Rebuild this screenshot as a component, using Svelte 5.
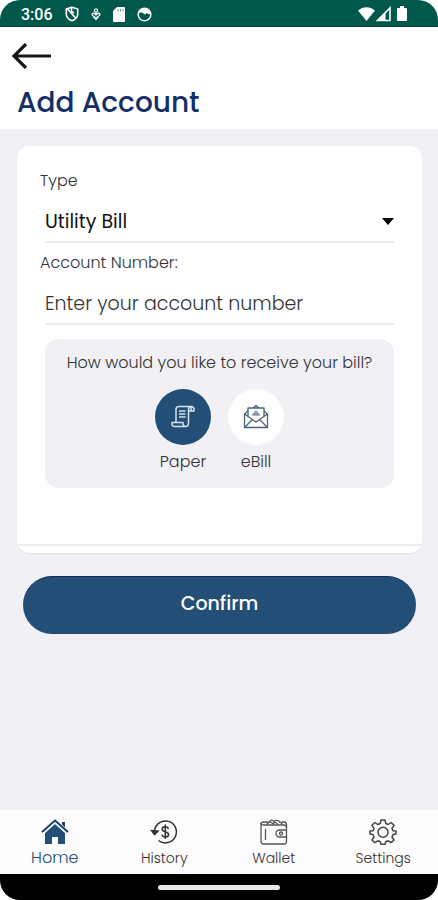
<script>
  let type = 'utility';
  let accountNumber = '';
  let delivery = 'paper';
</script>

<svelte:head>
  <title>Add Account</title>
</svelte:head>

<div class="app">
  <div class="status">
    <span class="time">3:06</span>
    <svg width="14" height="16" viewBox="0 0 14 16" fill="none" stroke="#fff" stroke-width="1.6">
      <path d="M7 1.2 12.7 3v5c0 3.4-2.8 5.7-5.7 6.8C4.1 13.7 1.3 11.4 1.3 8V3Z" />
      <path d="M2.5 3 11 12.500M6.500 2v3.500L9 7" />
    </svg>
    <svg width="10" height="14" viewBox="0 0 10 14" fill="none" stroke="#e4f1ed" stroke-width="1.3">
      <circle cx="5" cy="3.500" r="1.600" />
      <path d="M5 5v3M5 8C3 5.500 1 6 1 7.500S3 9 5 11C7 9 9 9 9 7.500S7 5.500 5 8M2.500 10 5 12.500 7.500 10" />
    </svg>
    <svg width="12" height="15" viewBox="0 0 12 15">
      <path d="M4 0h7a1 1 0 0 1 1 1v13a1 1 0 0 1-1 1H1a1 1 0 0 1-1-1V4Z" fill="#fff" />
      <path d="M5 2v2.500M7.500 2v2.500M10 2v2.500" stroke="#6b9c92" />
    </svg>
    <svg width="15" height="15" viewBox="0 0 15 15">
      <circle cx="7.500" cy="7.500" r="6.300" fill="none" stroke="#fff" stroke-width="1.500" />
      <path d="M1.500 5.500C3 2 5 1.500 7.500 1.500S12.500 3 13.500 6L12 7.500 10 6 8 7.500 5 5.500Z" fill="#fff" />
    </svg>
    <span class="spacer"></span>
    <svg width="50" height="16" viewBox="0 0 50 16">
      <path d="M0 4.500C5 0 12 0 17 4.500L8.500 15Z" fill="#fff" />
      <path d="M32 2v12.500H19.500Z" fill="none" stroke="#fff" stroke-width="1.600" />
      <path d="M27.500 7v8H20Z" fill="#fff" />
      <path d="M42 0h4v2h2a1 1 0 0 1 1 1v11a1 1 0 0 1-1 1h-8a1 1 0 0 1-1-1V3a1 1 0 0 1 1-1h2Z" fill="#fff" />
    </svg>
  </div>

  <header>
    <button class="back" type="button" aria-label="Back">
      <svg width="40" height="26" viewBox="0 0 40 26" fill="none" stroke="#171717" stroke-width="3.2">
        <path d="M14 1 2 13l12 12M2 13h37" />
      </svg>
    </button>
    <h1>Add Account</h1>
  </header>

  <main>
    <form on:submit|preventDefault>
      <div class="card">
        <div class="fields">
          <label class="caption" for="type">Type</label>
          <div class="control">
            <select id="type" bind:value={type}>
              <option value="utility">Utility Bill</option>
            </select>
            <svg width="12" height="7" viewBox="0 0 12 7"><path d="M0 0h12L6 7Z" /></svg>
          </div>
          <label class="caption" for="number">Account Number:</label>
          <div class="control">
            <input id="number" type="text" placeholder="Enter your account number" bind:value={accountNumber} />
          </div>

          <fieldset>
            <legend>How would you like to receive your bill?</legend>
            <div class="choices">
              <label class="choice">
                <input type="radio" name="delivery" value="paper" bind:group={delivery} />
                <span class="circle">
                  <svg width="26" height="24" viewBox="0 0 26 24" fill="none" stroke="currentColor" stroke-width="1.5" stroke-linejoin="round">
                    <path d="M6 17V4.500C6 2.500 7 1.500 9 1.500h12c-2 0-2.500 1-2.500 3V18c0 2-1 3.500-3 3.500S13 20 13 17.500H2C1.500 20 2.500 21.500 4.500 21.500h11" />
                    <path d="M21 1.500c2 0 3 1.200 3 3v1.500h-5.500M21 1.500V6" />
                    <path d="M9 6h6.500M9 9h6.500M9 12h6.500" />
                  </svg>
                </span>
                Paper
              </label>
              <label class="choice">
                <input type="radio" name="delivery" value="ebill" bind:group={delivery} />
                <span class="circle">
                  <svg width="26" height="24" viewBox="0 0 26 24" fill="none" stroke="currentColor" stroke-width="1.3" stroke-linejoin="round">
                    <path d="M5 6 1.500 9v13.500h23V9L21 6" />
                    <path d="M5 12V3h16v9M10 3l3-2.500L16 3" />
                    <path d="m1.500 9 11.500 8 11.500-8M1.500 22.500l8-8M24.500 22.500l-8-8" />
                    <path d="M9.500 10 13 6l3.500 4Z" fill="#8c9bab" stroke="#8c9bab" />
                  </svg>
                </span>
                eBill
              </label>
            </div>
          </fieldset>
        </div>
        <div class="foot"></div>
      </div>

      <button class="confirm" type="submit">Confirm</button>
    </form>
  </main>

  <nav>
    <a class="active" href="#home" aria-current="page">
      <svg width="28" height="26" viewBox="0 0 28 26">
        <path d="M4 14 14 5l10 9v11h-7v-7h-6v7H4Z" fill="#234f76" />
        <path d="M21 3h3v8l-3-3Z" fill="#1d3d6c" />
        <path d="M1 13.500 14 2l13 11.500" fill="none" stroke="#fcfcfc" stroke-width="4" />
        <path d="M1 13 14 1.500 27 13" fill="none" stroke="#1d3d6c" stroke-width="2" />
      </svg>
      Home
    </a>
    <a href="#history">
      <svg width="28" height="26" viewBox="0 0 28 26" fill="none" stroke="#333" stroke-width="1.5">
        <path d="M4.500 14.500a11 11 0 1 1 4 7" />
        <path d="m1.500 11.500 3 4 3.500-3.500Z" fill="#333" />
        <path d="M18.500 10c-.5-1.500-1.500-2.200-3.200-2.200-2 0-3.200 1-3.200 2.400 0 3.200 6.500 1.900 6.500 5.200 0 1.600-1.300 2.500-3.300 2.500-1.800 0-3-.8-3.400-2.300M15.300 5.500v14.500" />
      </svg>
      History
    </a>
    <a href="#wallet">
      <svg width="28" height="26" viewBox="0 0 28 26" fill="none" stroke="#555" stroke-width="1.3">
        <path d="M26.500 11V8.500c0-1.500-1-2.500-2.500-2.500H3.500C1.500 6 1 4 1 4v18.500a2.500 2.500 0 0 0 2.500 2.500H24c1.500 0 2.500-1 2.500-2.500V18" />
        <path d="M1 5c0-1.500 1-2 2.500-2H8M22 3h2c1.500 0 2.500 1 2.500 2.500v3" />
        <path d="M26.500 11h-7a3.500 3.500 0 0 0 0 7h7Z" />
        <circle cx="21" cy="14.500" r="1.500" />
        <path d="M5.500 10v11" />
        <path d="M7 6c0-3 4-4 6-1 1-2 4-2 5 1M9 3.500C10 .5 13 .5 14 3c1-2.500 5-2 5.500 0 1.500 0 2.500 1.500 2.500 3" />
      </svg>
      Wallet
    </a>
    <a href="#settings">
      <svg width="28" height="26" viewBox="0 0 28 26" fill="none" stroke="#444" stroke-width="1.5" stroke-linejoin="round">
        <path d="M12 1h4l.8 3.500 2.400 1 3-2L25 6.300l-2 3 1 2.400 3 .3v3l-3 .6-1 2.400 2 3-2.800 2.600-3-1.800-2.400 1L16 25.300h-4l-.8-2.500-2.400-1-3 1.800L3 21l2-3-1-2.400L1 15v-3l3-.3 1-2.400-2-3 2.800-2.800 3 2 2.400-1Z" />
        <circle cx="14" cy="13.300" r="5" />
      </svg>
      Settings
    </a>
  </nav>
  <div class="gesture"><span></span></div>
</div>

<style>
  :global(body) {
    background: #fff;
  }
  .app {
    display: flex;
    flex-direction: column;
    min-height: 100vh;
    overflow: hidden;
    border-radius: 20px;
    background: #f0f0f5;
    color: #333;
    font-family: Poppins, Inter, 'Open Sans', sans-serif;
  }
  button,
  input,
  select {
    font-family: inherit;
  }
  .status {
    display: flex;
    align-items: center;
    gap: 12px;
    box-sizing: border-box;
    height: 27px;
    padding: 2px 30px 0 21px;
    border-bottom: 1px solid #083c30;
    background: #00584b;
    color: #fff;
  }
  .time {
    font: 500 16px Roboto, sans-serif;
  }
  .spacer {
    flex: 1;
  }
  header {
    box-sizing: border-box;
    height: 102px;
    padding: 12px 12px 0;
    background: #fff;
  }
  .back {
    display: block;
    padding: 4px 0;
    border: 0;
    background: none;
    cursor: pointer;
  }
  .back svg {
    display: block;
  }
  h1 {
    margin: 10px 0 0 5px;
    color: #132f68;
    font-size: 28px;
    font-weight: 500;
    line-height: 40px;
  }
  main {
    flex: 1;
    padding: 17px 16px 0 17px;
  }
  .card {
    overflow: hidden;
    border-radius: 12px;
    background: #fff;
    box-shadow: 0 1px 1px #e2e2e6;
  }
  .fields {
    padding: 23px 28px 56px;
  }
  .foot {
    height: 7px;
    border-top: 2px solid #ededf0;
  }
  .caption {
    display: block;
    margin-left: -5px;
    font-size: 16px;
    font-weight: 300;
    line-height: 24px;
  }
  .control {
    display: flex;
    align-items: center;
    box-sizing: border-box;
    height: 50px;
    margin: 0 0 8px;
    padding-top: 8px;
    border-bottom: 2px solid #ededef;
  }
  .control select,
  .control input {
    flex: 1;
    min-width: 0;
    height: 40px;
    padding: 0;
    border: 0;
    outline: 0;
    background: none;
    appearance: none;
    color: #111;
    font-size: 19px;
  }
  .control input::placeholder {
    color: #333;
    font-weight: 300;
    opacity: 1;
  }
  fieldset {
    min-width: 0;
    margin: 14px 0 0;
    padding: 12px 0 14px;
    border: 0;
    border-radius: 14px;
    background: #f0f0f5;
    text-align: center;
  }
  legend {
    float: left;
    width: 100%;
    padding: 0;
    font-size: 16px;
    font-weight: 300;
    line-height: 24px;
  }
  .choices {
    display: flex;
    clear: both;
    justify-content: center;
    gap: 17px;
    padding-top: 14px;
  }
  .choice {
    width: 56px;
    font-size: 16px;
    font-weight: 300;
    line-height: 24px;
    cursor: pointer;
  }
  .choice input {
    position: absolute;
    opacity: 0;
  }
  .circle {
    display: flex;
    align-items: center;
    justify-content: center;
    height: 56px;
    margin-bottom: 5px;
    border-radius: 50%;
    background: #fff;
    color: #49617b;
  }
  input:checked + .circle {
    background: #234f76;
    color: #d5e3ee;
  }
  .confirm {
    display: block;
    width: calc(100% - 12px);
    height: 58px;
    margin: 23px 6px 0;
    padding: 0 0 4px;
    border: 0;
    border-top: 1px solid #112b66;
    border-radius: 29px;
    background: #234f76;
    color: #fff;
    font-size: 19px;
    font-weight: 500;
    cursor: pointer;
  }
  nav {
    display: flex;
    box-sizing: border-box;
    height: 64px;
    padding-top: 9px;
    background: #fcfcfc;
  }
  nav a {
    display: flex;
    flex: 1;
    flex-direction: column;
    align-items: center;
    gap: 3px;
    color: #333;
    font-size: 14px;
    font-weight: 300;
    line-height: 20px;
    text-decoration: none;
  }
  nav .active {
    color: #234f76;
    font-size: 16px;
  }
  .gesture {
    display: flex;
    align-items: center;
    justify-content: center;
    height: 26px;
    background: #000;
  }
  .gesture span {
    width: 28%;
    height: 5px;
    border-radius: 3px;
    background: #e8e8e8;
  }
</style>
